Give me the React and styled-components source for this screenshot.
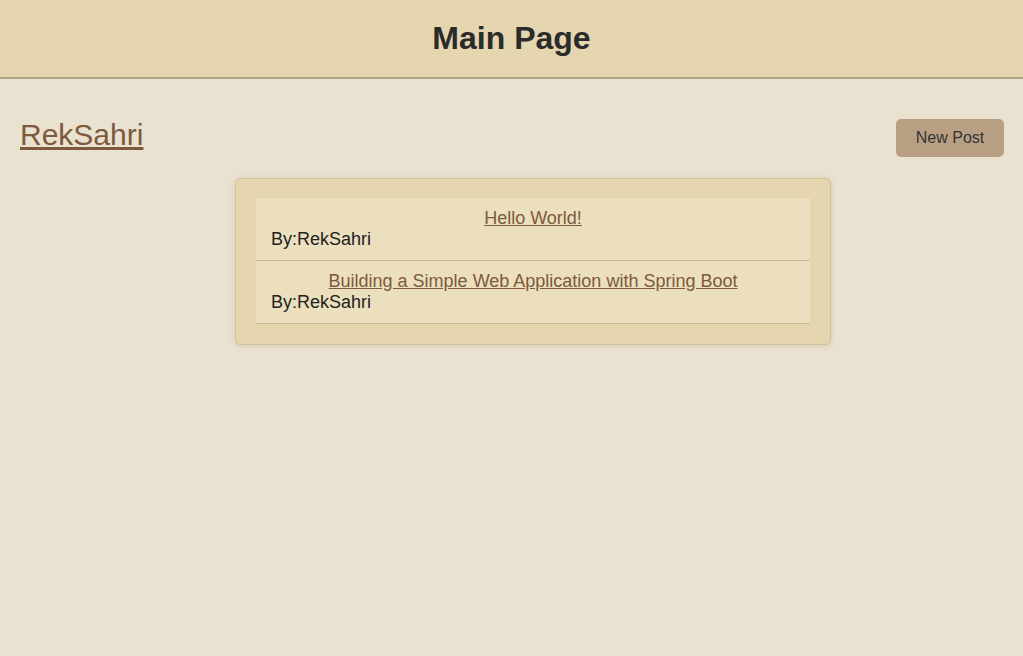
import React from "react";
import styled, { createGlobalStyle } from "styled-components";

const Global = createGlobalStyle`
  html, body { margin: 0; padding: 0; }
  body {
    background: #eae2d0;
    font-family: "Liberation Sans", Arial, sans-serif;
    color: #222;
    min-height: 100vh;
  }
`;

const Header = styled.header`
  background: #e5d6af;
  border-bottom: 2px solid #aca588;
  height: 77px;
  display: flex;
  align-items: center;
  justify-content: center;
`;

const Title = styled.h1`
  margin: 0;
  font-size: 32px;
  font-weight: bold;
  color: #2b2b2b;
`;

const TopRow = styled.div`
  display: flex;
  justify-content: space-between;
  align-items: flex-start;
  padding: 0 19px 0 20px;
  margin-top: 39px;
`;

const UserLink = styled.a`
  font-size: 30px;
  color: #7d5a3c;
  text-decoration: underline;
  line-height: 34px;
`;

const Button = styled.button`
  margin-top: 1px;
  width: 108px;
  height: 38px;
  border: none;
  border-radius: 5px;
  background: #b9a084;
  color: #333;
  font-family: "Liberation Sans", Arial, sans-serif;
  font-size: 16px;
  cursor: pointer;
`;

const Card = styled.div`
  width: 596px;
  box-sizing: border-box;
  margin: 21px 0 0 235px;
  background: #e5d6af;
  border: 1px solid #cfc29f;
  border-radius: 5px;
  box-shadow: 0 1px 6px rgba(120, 100, 60, 0.18);
  padding: 19px 20px 20px;
`;

const List = styled.ul`
  list-style: none;
  margin: 0;
  padding: 0;
`;

const Row = styled.li`
  background: #ebdfbe;
  border-bottom: 1px solid #c9bc9c;
  padding: 10px 15px;
  font-size: 18px;
`;

const PostLink = styled.a`
  display: block;
  text-align: center;
  color: #7d5a3c;
  text-decoration: underline;
`;

const Author = styled.div`
  color: #222;
`;

const posts = [
  { title: "Hello World!", author: "RekSahri" },
  { title: "Building a Simple Web Application with Spring Boot", author: "RekSahri" },
];

export default function App() {
  return (
    <>
      <Global />
      <Header>
        <Title>Main Page</Title>
      </Header>
      <TopRow>
        <UserLink href="#">RekSahri</UserLink>
        <Button>New Post</Button>
      </TopRow>
      <Card>
        <List>
          {posts.map((p) => (
            <Row key={p.title}>
              <PostLink href="#">{p.title}</PostLink>
              <Author>By:{p.author}</Author>
            </Row>
          ))}
        </List>
      </Card>
    </>
  );
}
